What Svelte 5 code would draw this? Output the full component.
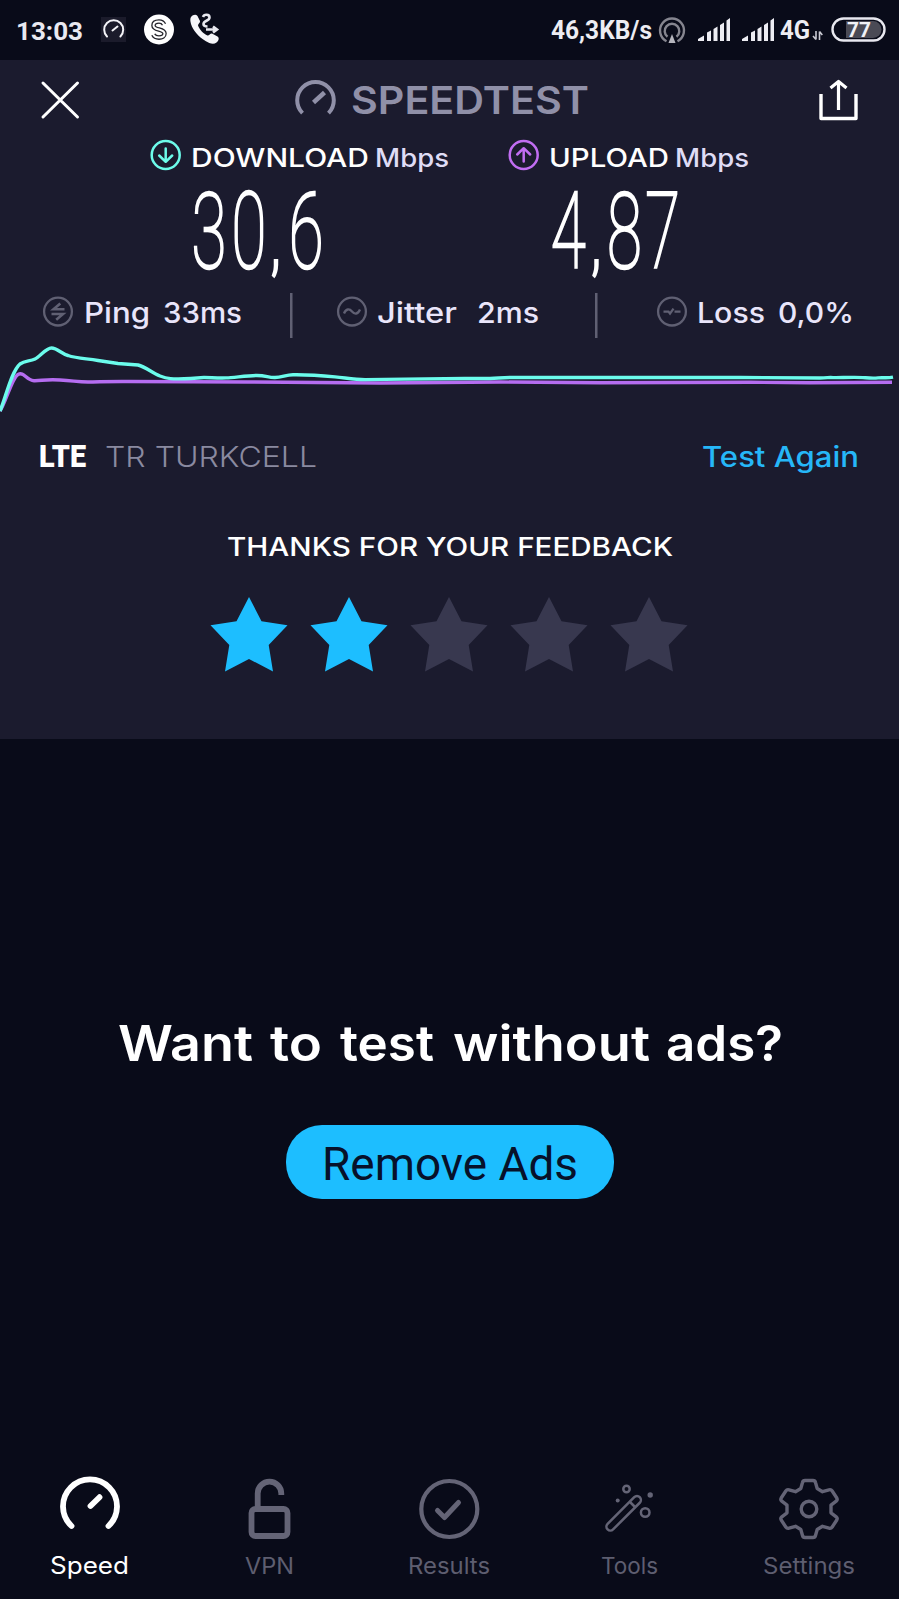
<script>
  const stars = [true, true, false, false, false];
  const question = [
    ['Want', 0, 135],
    ['to', 152, 52],
    ['test', 222, 94],
    ['without', 335, 197],
    ['ads?', 548, 117],
  ];
</script>

{#snippet label(text, width, height, baseline, cls)}
  <svg class="label" {width} {height} aria-label={text}>
    <text class={cls} x="0" y={baseline} textLength={width} lengthAdjust="spacingAndGlyphs">{text}</text>
  </svg>
{/snippet}

{#snippet signal()}
  <svg class="signal" width="33" height="60" fill="#ededf3">
    <path d="M0 41v-2l6-3.500V41zM9 41V32.500l4-2V41zM15.500 41V29l4-2.500V41zM22 41V25l4-2.500V41zM28.500 41V20.500l3.500-2.500V41z" />
  </svg>
{/snippet}

<div class="app">
  <header class="status">
    {@render label('13:03', 67, 60, 39.5, 'clock')}
    <svg class="gauge-note" width="26" height="60">
      <rect y="17" width="25" height="25" fill="#1b1b2b" />
      <path d="M6 36.500a9.500 9.500 0 1 1 13.400 0M11.500 30.500l5-4" fill="none" stroke="#f4f4f8" stroke-width="2" stroke-linecap="round" />
    </svg>
    <svg class="coin" width="30" height="60">
      <circle cx="15" cy="29.500" r="15" fill="#fff" />
      <path d="M20 24.500c-1-2.300-3-3-5-3-3.500 0-5.500 1.500-5.500 3.900 0 5.400 11 2.800 11 8.200 0 2.600-2.400 4-5.500 4-2.700 0-4.700-.9-5.700-3" fill="none" stroke="#25252c" stroke-width="4.600" />
      <path d="M20 24.500c-1-2.300-3-3-5-3-3.500 0-5.500 1.500-5.500 3.900 0 5.400 11 2.800 11 8.200 0 2.600-2.400 4-5.500 4-2.700 0-4.700-.9-5.700-3" fill="none" stroke="#fff" stroke-width="2" stroke-linecap="square" />
    </svg>
    <svg class="call" width="30" height="60">
      <path d="M1 17c2-2.500 5-3 6.500-1l2.500 5c.6 1.500-2.300 3-2 4.500 1.500 4 5.500 8.500 9.500 10 1.500.5 3-2.600 4.500-2l5.500 3c2 1.500 1.500 4-1 6-3 2.400-7 1-11-1.500C8.500 36.600 3 30.500 1 24c-.8-3-1-5.500 0-7z" fill="#f6f6fa" />
      <path d="M13 17c1-3 6.500-3 6.500.500 0 3.500-6 3-6 6.500 0 2 2 2.500 4 2.500M16 29.500h10M23 26.500l4 3-4 3" fill="none" stroke="#e8e8ef" stroke-width="2.600" />
    </svg>
    <div class="status-right">
      {@render label('46,3KB/s', 101, 60, 39, 'speed')}
      <svg class="hotspot" width="26" height="60" fill="none" stroke="#85858f" stroke-width="2.400">
        <path d="M7.500 41.200a12 12 0 1 1 11 0M8.500 36.800a7.300 7.300 0 1 1 9 0" />
        <path d="M13 34l-3.500 9h7z" fill="#b5b5bd" stroke="none" />
      </svg>
      {@render signal()}
      {@render signal()}
      {@render label('4G', 30, 60, 39, 'speed')}
      <svg class="arrows" width="12" height="60" fill="none" stroke="#c9c9d2" stroke-width="1.600">
        <path d="M4 31v8.500M4 39.500L1 36M7.500 40v-8.500M7.500 31.500l2.800 3.500" />
      </svg>
      <svg class="battery" width="56" height="60">
        <rect x="1.500" y="18.500" width="52" height="22" rx="11" fill="none" stroke="#e8e8ef" stroke-width="2.400" />
        <path d="M15 21h27a8.500 8.500 0 0 1 0 17H15z" fill="#4a4a55" />
        <text class="charge" x="16" y="37" textLength="24" lengthAdjust="spacingAndGlyphs">77</text>
      </svg>
    </div>
  </header>

  <main class="panel">
    <div class="title">
      <svg class="close" width="38" height="70" stroke="#fff" stroke-width="3" stroke-linecap="round">
        <path d="M2 23l34.500 34M36.500 23L2 57" />
      </svg>
      <div class="brand">
        <svg width="42" height="70" fill="none" stroke="#9090a8" stroke-width="4">
          <path d="M7.500 53.200a18.300 18.300 0 1 1 26 0" />
          <path d="M18.500 42.500l11-10" stroke-width="4.500" />
        </svg>
        {@render label('SPEEDTEST', 238, 70, 54, 'name')}
      </div>
      <svg class="share" width="40" height="70" fill="none" stroke="#fff" stroke-width="3.400" stroke-linejoin="round">
        <path d="M2 34v24.500h35V34" />
        <path d="M19.500 50V22M11.500 28l8-6.500 8 6.500" stroke-width="3.200" />
      </svg>
    </div>

    <div class="results">
      <section class="download">
        <div class="kind">
          <svg width="32" height="50" fill="none" stroke="#6dfbea" stroke-width="2.500" stroke-linecap="round" stroke-linejoin="round">
            <circle cx="15.700" cy="25" r="14" />
            <path d="M15.700 18.500v13M9.200 25.500l6.500 6.300 6.500-6.300" />
          </svg>
          {@render label('DOWNLOAD', 178, 50, 36.5, 'kind-name')}
          {@render label('Mbps', 74, 50, 36.5, 'unit')}
        </div>
        <div class="value">
          <svg width="136" height="105">
            <text class="figure" transform="scale(.6 1)" x="2.300 69 135 164.500" y="87.500">30<tspan class="comma">,</tspan>6</text>
          </svg>
        </div>
      </section>
      <section class="upload">
        <div class="kind">
          <svg width="32" height="50" fill="none" stroke="#c16df2" stroke-width="2.500" stroke-linecap="round" stroke-linejoin="round">
            <circle cx="15.700" cy="25" r="14" />
            <path d="M15.700 31.500v-13M9.200 24.500l6.500-6.300 6.500 6.300" />
          </svg>
          {@render label('UPLOAD', 120, 50, 36.5, 'kind-name')}
          {@render label('Mbps', 74, 50, 36.5, 'unit')}
        </div>
        <div class="value">
          <svg width="136" height="105">
            <text class="figure" transform="scale(.6 1)" x="4.500 72.500 98.500 162" y="87.500">4<tspan class="comma">,</tspan>87</text>
          </svg>
        </div>
      </section>
    </div>

    <div class="stats">
      <div class="stat ping">
        <svg width="30" height="55" fill="none" stroke="#606073" stroke-width="2.300">
          <circle cx="15" cy="26.600" r="13.900" />
          <path d="M21.500 24.300H10.500l6.800-5.800M8.500 29h11.500l-6.800 5.800" stroke-width="2.600" />
        </svg>
        {@render label('Ping', 66, 55, 37.5, 'stat-text')}
        {@render label('33ms', 79, 55, 37.5, 'stat-text')}
      </div>
      <div class="stat jitter">
        <svg width="30" height="55" fill="none" stroke="#606073" stroke-width="2.300">
          <circle cx="15" cy="26.600" r="13.900" />
          <path d="M7 28.500c2-5 5.500-5 8-2s6 3 8-2" />
        </svg>
        {@render label('Jitter', 80, 55, 37.5, 'stat-text')}
        {@render label('2ms', 62, 55, 37.5, 'stat-text')}
      </div>
      <div class="stat loss">
        <svg width="30" height="55" fill="none" stroke="#606073" stroke-width="2.300">
          <circle cx="15" cy="26.600" r="13.900" />
          <path d="M6.500 26.600h5l1.500 2 3.500-5M17.500 26.600h6" />
        </svg>
        {@render label('Loss', 68, 55, 37.5, 'stat-text')}
        {@render label('0,0%', 76, 55, 37.5, 'stat-text')}
      </div>
    </div>

    <svg class="chart" width="899" height="80" fill="none" stroke-width="3.400">
      <path stroke="#b56df0" d="M0 71C6 62 12 38 18 34.500s8 6 16 6.200S45 39 60 40s18 2 28 2 20-.7 40-.5l120 .5 132 1 120-1 100 .8 150-.5 60 .4 82-.5" />
      <path stroke="#6bfcec" d="M0 71C6 57 11 32 20 24c5-3.500 10-2.500 15-5s11-11 16.500-11S62 14 68 15.500c9 3 18 3 30 5l20 3 20 1.500c8 2 14 8 22 11s12 3 24 2.800 14-1.300 20-1.300 14 .7 22 .4 20-2.200 30-2.400 12 2.200 19 2 11-2.700 18-2.800 30 1 42 2.200 20 2.600 30 2.700l40-.5 60-.6H490c8 0 10-1 20-1H740l80 .5c8 0 8-.8 13-.4s20-.8 30 0 10 .9 15 .3 9 .5 15-.8" />
    </svg>

    <div class="provider">
      {@render label('LTE', 47, 70, 47, 'lte')}
      {@render label('TR TURKCELL', 212, 70, 47, 'carrier')}
      <div class="again">{@render label('Test Again', 157, 70, 47, 'link')}</div>
    </div>

    <div class="thanks">
      {@render label('THANKS FOR YOUR FEEDBACK', 446, 90, 66, 'thanks-text')}
    </div>

    <div class="stars">
      {#each stars as on}
        <svg class:on width="78" height="76" viewBox="0 0 78 76">
          <path d="M39 0L51.500 24.300 77.500 28.200 58.700 48 63 74.500 39 62 15 74.500 19.300 48 .5 28.200 26.500 24.300z" />
        </svg>
      {/each}
    </div>
  </main>

  <section class="promo">
    <svg width="664" height="90">
      {#each question as [word, x, width]}
        <text class="question" {x} y="61" textLength={width} lengthAdjust="spacingAndGlyphs">{word}</text>
      {/each}
    </svg>
    <button>{@render label('Remove Ads', 256, 74, 55, 'remove')}</button>
  </section>

  <nav>
    <div class="tab active">
      <svg width="64" height="74" fill="none" stroke="#fff" stroke-width="5.800" stroke-linecap="round">
        <path d="M13.500 56a27 27 0 1 1 37 0M32.500 36l9-8.800" />
      </svg>
      {@render label('Speed', 79, 50, 30, 'tab-text')}
    </div>
    <div class="tab">
      <svg width="64" height="74" fill="none" stroke="#646476" stroke-width="5.800">
        <rect x="13.500" y="39" width="36" height="27" rx="4" />
        <path d="M19.700 39V23.500a11.800 11.800 0 0 1 23.600 0v1.500" />
      </svg>
      {@render label('VPN', 49, 50, 30, 'tab-text')}
    </div>
    <div class="tab">
      <svg width="64" height="74" fill="none" stroke="#646476" stroke-width="4.200" stroke-linecap="round" stroke-linejoin="round">
        <circle cx="32.300" cy="39" r="28" />
        <path d="M20.500 40.500l7 7 14-15" stroke-width="5" />
      </svg>
      {@render label('Results', 82, 50, 30, 'tab-text')}
    </div>
    <div class="tab">
      <svg width="64" height="74" fill="none" stroke="#646476" stroke-width="2.500">
        <rect x="-3.900" y="-23" width="7.800" height="45.500" rx="3.900" transform="translate(26.500 43.500) rotate(45)" />
        <path d="M33 32l5.500 5.500" />
        <circle cx="29.500" cy="19" r="3.200" />
        <circle cx="48.200" cy="42.500" r="4.300" />
        <circle cx="20.700" cy="30.500" r="2" fill="#646476" stroke="none" />
        <circle cx="53.200" cy="25" r="2.700" fill="#646476" stroke="none" />
      </svg>
      {@render label('Tools', 57, 50, 30, 'tab-text')}
    </div>
    <div class="tab">
      <svg width="64" height="74" fill="none" stroke="#646476" stroke-width="3.400" stroke-linejoin="round">
        <path transform="translate(32 39)" d="M-4-28.500H4Q6-28.500 6.500-26.500L8.200-20.500 13.500-17.300 20-19.200Q22-19.800 23.200-18L27.800-11Q28.800-9.200 27.200-7.800L22-3.800V3.800L27.200 7.800Q28.800 9.200 27.800 11L23.200 18Q22 19.800 20 19.200L13.500 17.300 8.200 20.500 6.500 26.500Q6 28.500 4 28.500H-4Q-6 28.500-6.500 26.500L-8.200 20.500-13.500 17.300-20 19.200Q-22 19.800-23.200 18L-27.800 11Q-28.800 9.200-27.200 7.800L-22 3.800V-3.800L-27.200-7.800Q-28.800-9.200-27.800-11L-23.200-18Q-22-19.800-20-19.200L-13.500-17.300-8.200-20.500-6.500-26.500Q-6-28.500-4-28.500z" />
        <circle cx="32" cy="39" r="7.800" />
      </svg>
      {@render label('Settings', 92, 50, 30, 'tab-text')}
    </div>
  </nav>
</div>

<style>
  :global(body) { background: #090b19; }
  .app {
    width: 899px;
    height: 1599px;
    overflow: hidden;
    display: flex;
    flex-direction: column;
    background: #090b19;
    font-family: Inter, "Open Sans", sans-serif;
  }
  svg { display: block; flex: none; overflow: visible; }

  .status { display: flex; height: 60px; padding: 0 12px 0 15.500px; }
  .clock { font: 700 26.500px Roboto, sans-serif; fill: #e9e9f1; }
  .gauge-note { margin-left: 18px; }
  .coin { margin-left: 17px; }
  .call { margin-left: 16.500px; }
  .status-right { display: flex; margin-left: auto; }
  .speed { font: 700 25.500px Roboto, sans-serif; fill: #ededf3; }
  .hotspot { margin: 0 13px 0 7px; }
  .signal { margin-right: 11px; }
  .signal + .label { margin-left: -6px; }
  .arrows { margin: 0 7px 0 2px; }
  .charge { font: 700 21px Roboto, sans-serif; fill: #f1f1f6; }

  .panel { height: 678.500px; flex: none; background: #1b1b2e; }
  .title { display: flex; height: 70px; padding: 0 40px 0 41px; }
  .brand { display: flex; gap: 14px; margin-left: 216px; }
  .share { margin-left: auto; }
  .name { font-size: 38.500px; font-weight: 600; fill: #9090a8; }

  .results { display: flex; padding-left: 150px; }
  .download { width: 358px; }
  .kind { display: flex; height: 50px; }
  .kind .label { margin-left: 9px; }
  .kind .label + .label { margin-left: 6px; }
  .value { display: flex; height: 105px; padding-left: 40px; }
  .kind-name { font-size: 26px; font-weight: 550; fill: #fff; }
  .unit { font-size: 25.500px; font-weight: 550; fill: #dfdcf5; }
  .figure {
    font: 100 106px Roboto, sans-serif;
    fill: #fff;
    stroke: #fff;
    stroke-width: 2.200px;
    vector-effect: non-scaling-stroke;
  }
  .comma { font-size: 70px; font-weight: 500; stroke: none; }

  .stats { display: flex; height: 55px; }
  .stat { display: flex; box-sizing: border-box; }
  .ping { width: 290px; padding-left: 42.500px; }
  .jitter { width: 305px; padding-left: 46.500px; }
  .loss { flex: 1; padding-left: 62px; }
  .stat .label { margin-left: 11px; }
  .ping .label + .label { margin-left: 13px; }
  .jitter .label { margin-left: 10px; }
  .jitter .label + .label { margin-left: 20.500px; }
  .loss .label { margin-left: 10px; }
  .loss .label + .label { margin-left: 13px; }
  .jitter, .loss {
    background: linear-gradient(#606073, #606073) 0 8px / 2.500px 45px no-repeat;
  }
  .stat-text { font-size: 28px; font-weight: 550; fill: #e9e5fa; }

  .provider { display: flex; height: 70px; padding: 0 40px 0 39px; }
  .provider .label + .label { margin-left: 19px; }
  .again { margin-left: auto; }
  .lte { font: 900 32px Roboto, sans-serif; fill: #fff; }
  .carrier { font-size: 28.500px; font-weight: 350; fill: #8a8aa0; }
  .link { font-size: 28px; font-weight: 550; fill: #26b7f8; }

  .thanks { display: flex; justify-content: center; height: 90px; }
  .thanks-text { font-size: 25.500px; font-weight: 550; fill: #fff; }
  .stars { display: flex; justify-content: center; gap: 22px; padding: 16.500px .500px 0 0; }
  .stars svg { fill: #38384f; }
  .stars .on { fill: #1dbeff; }

  .promo { flex: 1; display: flex; flex-direction: column; align-items: center; padding-top: 261.500px; }
  .question { font-size: 49.500px; font-weight: 600; fill: #fff; }
  button {
    display: flex;
    justify-content: center;
    width: 328px;
    height: 74px;
    margin: 34.500px 0 0;
    padding: 0;
    border: 0;
    border-radius: 36px;
    background: #1dbeff;
  }
  .remove { font: 400 46px Roboto, sans-serif; fill: #07112a; }

  nav { display: grid; grid-template-columns: repeat(5, 179.800px); height: 129px; flex: none; }
  .tab { display: flex; flex-direction: column; align-items: center; }
  .tab-text { font-size: 22.500px; font-weight: 400; fill: #5e5e70; }
  .active .tab-text { font-size: 24px; fill: #fff; }
</style>
